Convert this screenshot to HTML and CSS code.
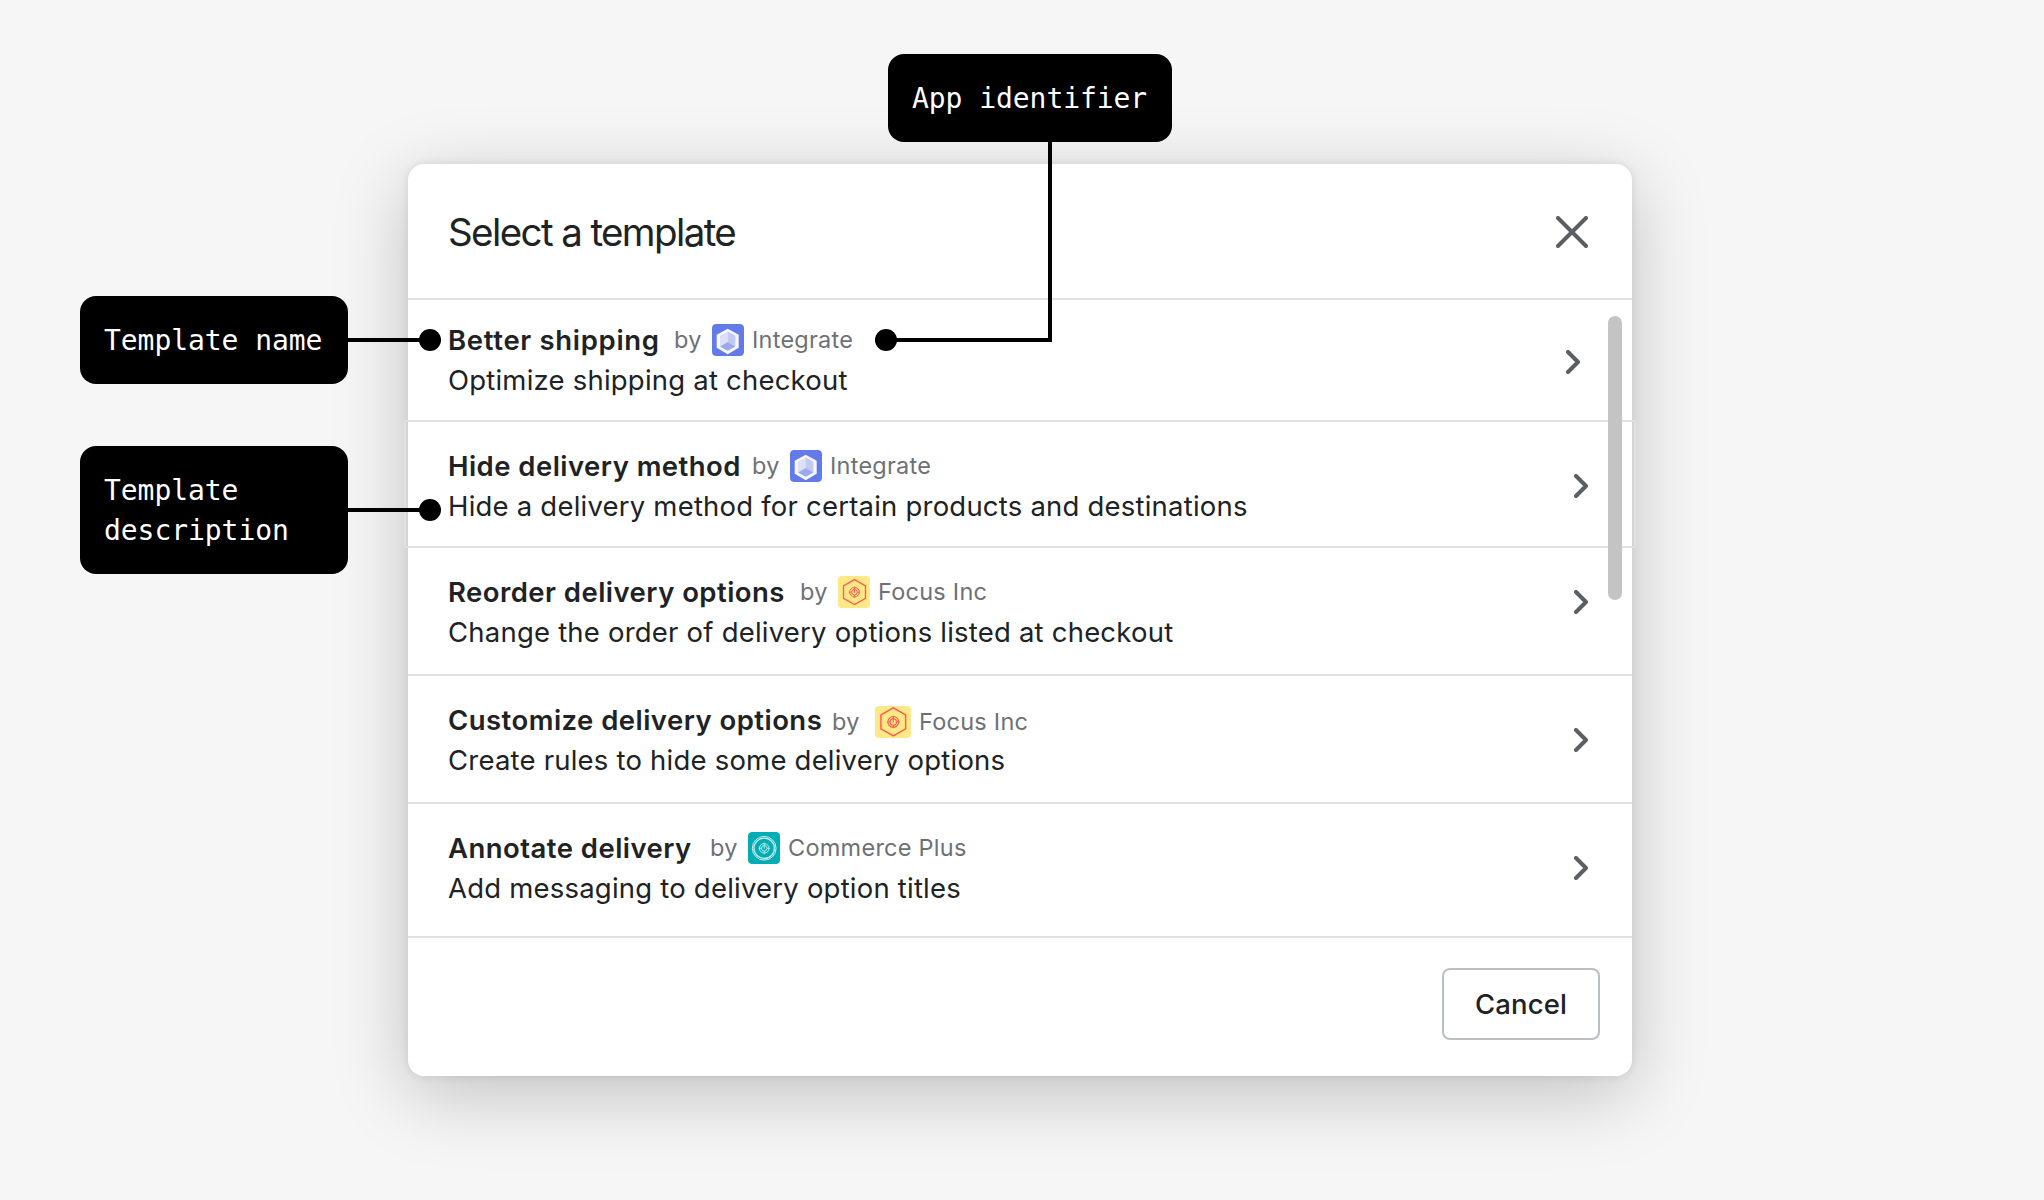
FILE: index.html
```html
<!DOCTYPE html>
<html lang="en">
<head>
    <meta charset="UTF-8">
    <meta name="viewport" content="width=device-width, initial-scale=1.0">
    <title>Select a template</title>
    <link rel="stylesheet" href="styles.css">
</head>
<body>
    <!-- Shared icons -->
    <svg class="sprite" aria-hidden="true">
        <symbol id="chevron" viewBox="0 0 14 24">
            <path d="M2 2l10 10L2 22" fill="none" stroke="#5c5f62" stroke-width="4" stroke-linecap="round" stroke-linejoin="round"/>
        </symbol>
        <symbol id="integrate" viewBox="0 0 32 32">
            <rect width="32" height="32" rx="3.5" fill="#637be8"/>
            <path d="M15.7 4.8l11 6v13l-11 6.4-11-6.4v-13z" fill="#f7f7fd"/>
            <path d="M15.7 7.6v10.6L8 22.6V11.8z" fill="#dcdff5"/>
            <path d="M15.7 7.6v10.6l7.7 4.4V11.8z" fill="#c3caf2"/>
            <path d="M15.7 18l7.7 4.6-7.7 4.2L8 22.6z" fill="#9ba8ee"/>
        </symbol>
        <symbol id="focus" viewBox="0 0 32 32">
            <g fill="none" stroke="#ff5a4f">
                <path d="M16.5 3.6l11 6.3v12.4l-11 6.3-11-6.3V9.9z" stroke-width="1.3"/>
                <circle cx="16.5" cy="16.2" r="4.8" stroke-width="1"/>
                <circle cx="16.5" cy="16.2" r="2.8" stroke-width="1"/>
                <path d="M16.5 10.6v6.2M10.9 16.2h2.7M19.4 16.2h2.7M16.5 19.1v2.7" stroke-width="1"/>
            </g>
        </symbol>
        <symbol id="commerce" viewBox="0 0 32 32">
            <rect width="32" height="32" rx="3.5" fill="#00adb5"/>
            <g fill="none" stroke="#c9eff0">
                <circle cx="16.2" cy="16.3" r="11.9" stroke-width="1"/>
                <circle cx="16.2" cy="16.3" r="10.2" stroke-width="1.3"/>
                <circle cx="16.2" cy="16.3" r="4.8" stroke-width=".9"/>
                <circle cx="16.2" cy="16.3" r="2.8" stroke-width=".9"/>
                <path d="M16.2 10.7v6.2M10.6 16.3h2.7M19.1 16.3h2.7M16.2 19.2v2.7" stroke-width=".9"/>
            </g>
        </symbol>
    </svg>

    <div class="modal">
        <div class="modal-header">
            <h2 class="modal-title">Select a template</h2>
            <svg class="close" viewBox="0 0 32 32">
                <path d="M2 2l28 28M30 2L2 30" fill="none" stroke="#5c5f62" stroke-width="4" stroke-linecap="round"/>
            </svg>
        </div>

        <div class="template-list">
            <div class="template template-first">
                <div class="template-info">
                    <div class="template-heading">
                        <span class="template-name name-better">Better shipping</span>
                        <span class="by">by</span>
                        <svg class="app-icon"><use href="#integrate"/></svg>
                        <span class="app-name">Integrate</span>
                    </div>
                    <p class="template-description">Optimize shipping at checkout</p>
                </div>
                <svg class="chevron"><use href="#chevron"/></svg>
            </div>
            <div class="template template-active">
                <div class="template-info">
                    <div class="template-heading">
                        <span class="template-name name-hide">Hide delivery method</span>
                        <span class="by">by</span>
                        <svg class="app-icon"><use href="#integrate"/></svg>
                        <span class="app-name">Integrate</span>
                    </div>
                    <p class="template-description">Hide a delivery method for certain products and destinations</p>
                </div>
                <svg class="chevron"><use href="#chevron"/></svg>
            </div>
            <div class="template">
                <div class="template-info">
                    <div class="template-heading">
                        <span class="template-name name-reorder">Reorder delivery options</span>
                        <span class="by">by</span>
                        <svg class="app-icon app-icon-focus"><use href="#focus"/></svg>
                        <span class="app-name">Focus Inc</span>
                    </div>
                    <p class="template-description">Change the order of delivery options listed at checkout</p>
                </div>
                <svg class="chevron"><use href="#chevron"/></svg>
            </div>
            <div class="template template-customize">
                <div class="template-info">
                    <div class="template-heading">
                        <span class="template-name name-customize">Customize delivery options</span>
                        <span class="by by-wide">by</span>
                        <svg class="app-icon app-icon-focus app-icon-wide" viewBox="2 2 28.5 28.5"><use href="#focus" width="32" height="32"/></svg>
                        <span class="app-name">Focus Inc</span>
                    </div>
                    <p class="template-description">Create rules to hide some delivery options</p>
                </div>
                <svg class="chevron"><use href="#chevron"/></svg>
            </div>
            <div class="template template-last">
                <div class="template-info">
                    <div class="template-heading">
                        <span class="template-name name-annotate">Annotate delivery</span>
                        <span class="by">by</span>
                        <svg class="app-icon"><use href="#commerce"/></svg>
                        <span class="app-name">Commerce Plus</span>
                    </div>
                    <p class="template-description">Add messaging to delivery option titles</p>
                </div>
                <svg class="chevron"><use href="#chevron"/></svg>
            </div>
            <div class="scrollbar"></div>
        </div>

        <div class="modal-footer">
            <button class="cancel" type="button">Cancel</button>
        </div>
    </div>

    <!-- Annotations on top of the modal -->
    <div class="callout callout-app">App identifier</div>
    <div class="callout callout-name">Template name</div>
    <div class="callout callout-description">Template description</div>
    <svg class="connectors" viewBox="0 0 2044 1200">
        <path d="M348 340H430M348 510H430M886 340H1050V142" fill="none" stroke="#000" stroke-width="4"/>
        <circle cx="430" cy="340" r="11"/>
        <circle cx="430" cy="510" r="11"/>
        <circle cx="886" cy="340" r="11"/>
    </svg>
</body>
</html>
```
FILE: styles.css
```css
body {
    margin: 0;
    padding: 164px 0 0 408px;
    height: 1200px;
    box-sizing: border-box;
    position: relative;
    overflow: hidden;
    background-color: #f6f6f6;
    font-family: Inter, "Liberation Sans", sans-serif;
    color: #202223;
}
h2, p {
    margin: 0;
}
.sprite {
    position: absolute;
    width: 0;
    height: 0;
}
.modal {
    width: 1224px;
    height: 912px;
    border-radius: 16px;
    background-color: #fff;
    box-shadow: 0 0 10px rgba(0, 0, 0, 0.09), 0 18px 76px rgba(0, 0, 0, 0.22);
}
.modal-header {
    height: 136px;
    box-sizing: border-box;
    padding: 2px 44px 0 40px;
    display: flex;
    align-items: center;
    justify-content: space-between;
    border-bottom: 2px solid #e1e1e1;
}
.modal-title {
    font-size: 38.5px;
    line-height: 48px;
    font-weight: 400;
    letter-spacing: -1.6px;
}
.close {
    width: 32px;
    height: 32px;
}
.template-list {
    position: relative;
}
.template {
    height: 128px;
    box-sizing: border-box;
    padding: 24px 44px 0 40px;
    display: flex;
    justify-content: space-between;
    border-bottom: 2px solid #e1e1e1;
}
.template-first {
    height: 120px;
    padding-top: 20px;
    padding-right: 52px;
    border-bottom: 0;
}
/* the active row is outlined and a little wider than the modal */
.template-active {
    margin: 0 -4px;
    padding: 24px 46px 0 42px;
    border: 2px solid #e1e1e1;
}
.template-last {
    height: 134px;
}
.template-heading {
    display: flex;
    align-items: center;
    height: 40px;
    white-space: nowrap;
}
.template-name {
    font-size: 27.5px;
    line-height: 40px;
    font-weight: 600;
    letter-spacing: 0.46px;
}
.name-better {
    width: 226px;
    letter-spacing: 0.68px;
}
.name-hide {
    width: 304px;
}
.name-reorder {
    width: 352px;
}
.name-customize {
    width: 384px;
}
.name-annotate {
    width: 262px;
}
.by, .app-name {
    font-size: 23.5px;
    line-height: 32px;
    letter-spacing: 0.25px;
    color: #6d7175;
}
.by {
    width: 38px;
}
.by-wide {
    width: 43px;
}
.app-icon {
    width: 32px;
    height: 32px;
    margin-right: 8px;
    border-radius: 4px;
}
.app-icon-focus {
    background-color: #ffe987;
}
.app-icon-wide {
    width: 36px;
}
.template-customize .by, .template-customize .app-icon, .template-customize .app-name {
    margin-top: 4px;
}
.template-description {
    font-size: 27.5px;
    line-height: 40px;
    letter-spacing: 0.21px;
    white-space: nowrap;
}
.chevron {
    width: 14px;
    height: 24px;
    margin-top: 18px;
}
.template-first .chevron {
    margin-top: 30px;
}
.template-active .chevron, .template-customize .chevron, .template-last .chevron {
    margin-top: 28px;
}
.scrollbar {
    position: absolute;
    top: 16px;
    right: 10px;
    width: 14px;
    height: 284px;
    border-radius: 7px;
    background-color: #c4c4c4;
}
.modal-footer {
    display: flex;
    justify-content: flex-end;
    padding: 30px 32px 0 0;
}
.cancel {
    width: 158px;
    height: 72px;
    padding: 0;
    border: 2px solid #babfc3;
    border-radius: 8px;
    background-color: #fff;
    color: #202223;
    font-family: inherit;
    font-size: 27.5px;
    font-weight: 500;
    letter-spacing: 0.1px;
}
.callout {
    position: absolute;
    box-sizing: border-box;
    padding: 25px 24px 23px;
    border-radius: 16px;
    background-color: #000;
    color: #fff;
    font-family: "DejaVu Sans Mono", monospace;
    font-size: 28px;
    line-height: 40px;
    letter-spacing: -0.06px;
}
.callout-app {
    left: 888px;
    top: 54px;
    width: 284px;
}
.callout-name {
    left: 80px;
    top: 296px;
    width: 268px;
}
.callout-description {
    left: 80px;
    top: 446px;
    width: 268px;
}
.connectors {
    position: absolute;
    left: 0;
    top: 0;
    width: 2044px;
    height: 1200px;
}
```
